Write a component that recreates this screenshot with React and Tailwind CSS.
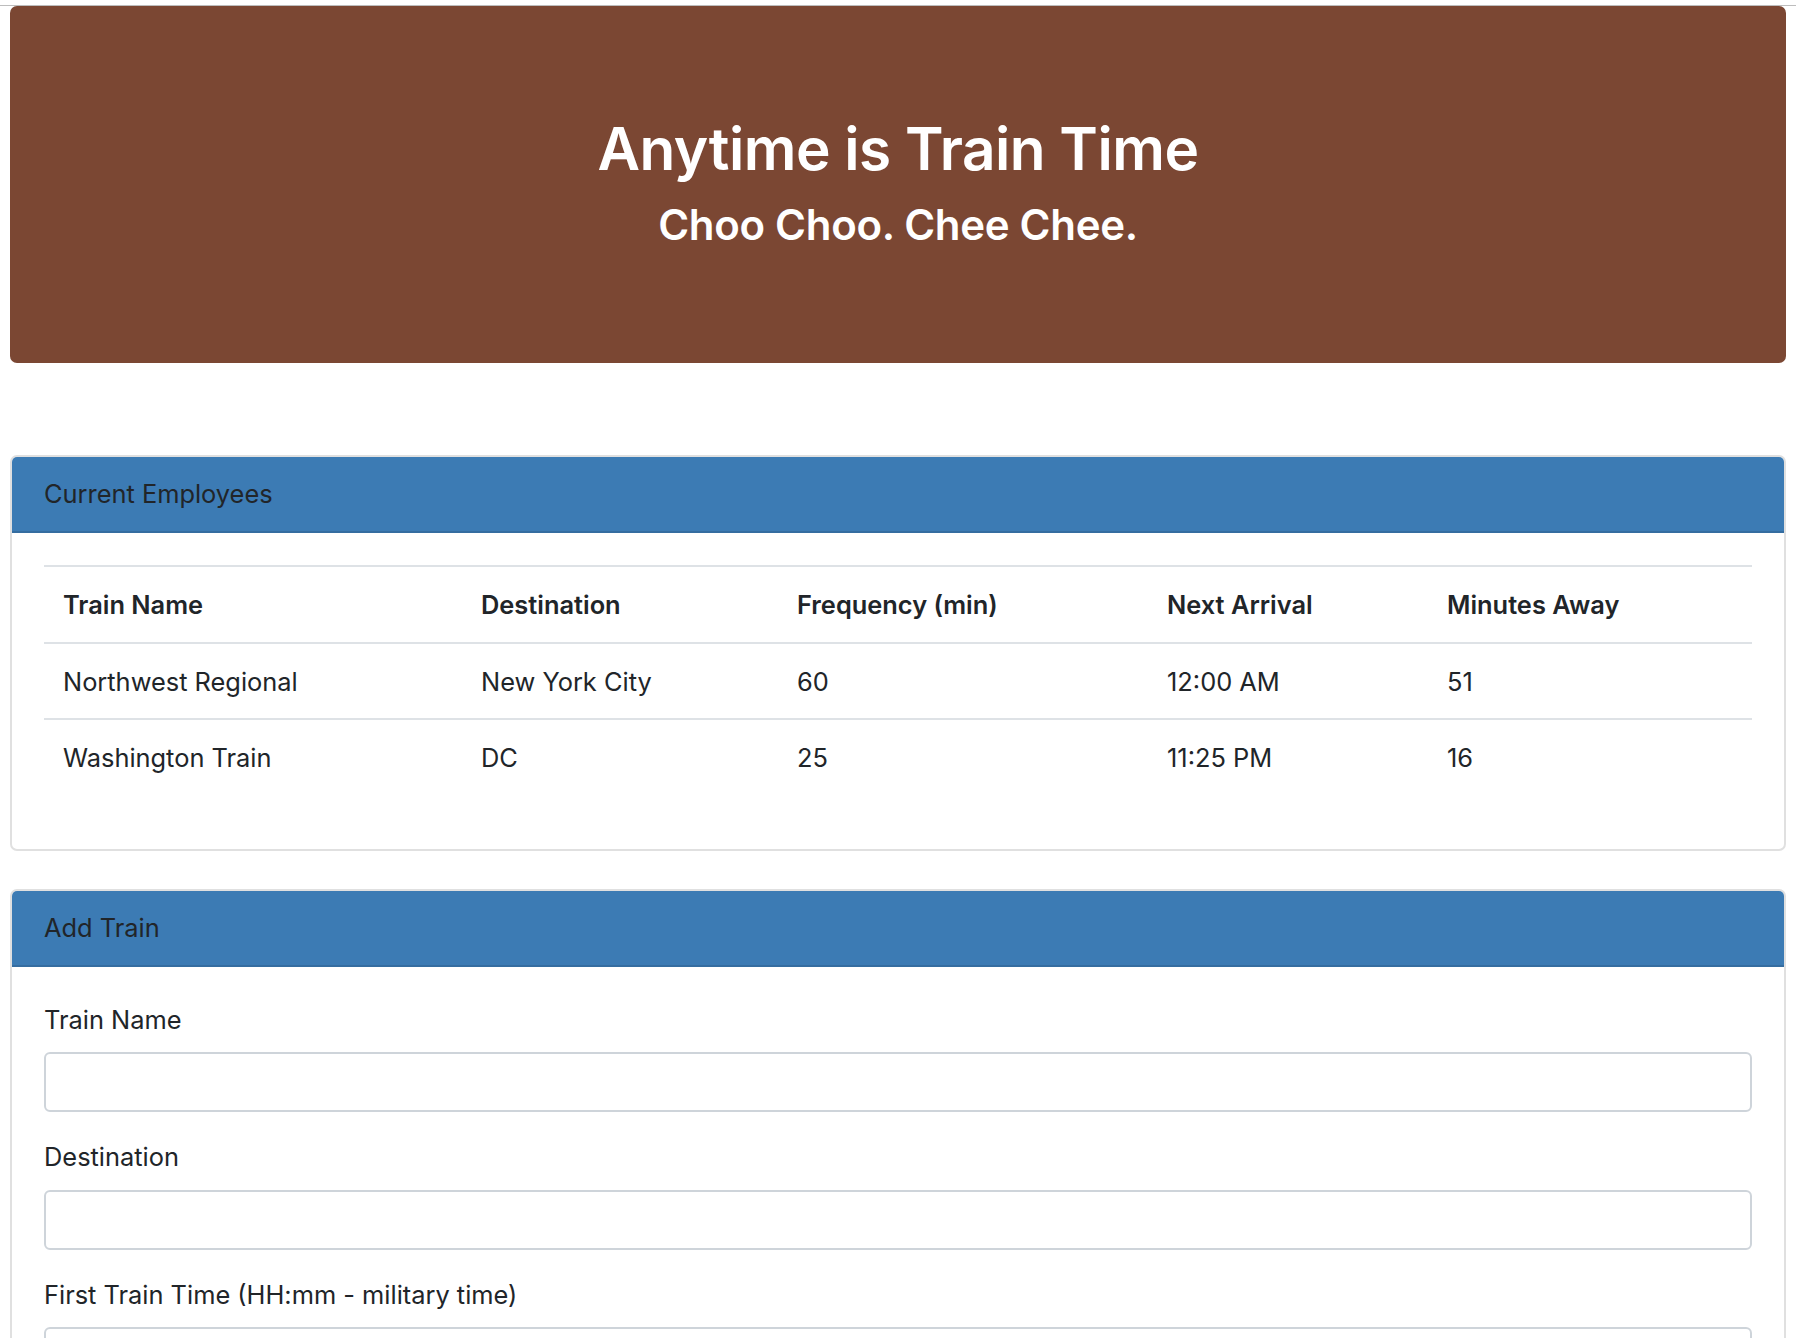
import React from "react";

const rows = [
  ["Northwest Regional", "New York City", "60", "12:00 AM", "51"],
  ["Washington Train", "DC", "25", "11:25 PM", "16"],
];

function Field({ label }) {
  return (
    <div className="mb-[26px]">
      <label className="block h-[38.4px] leading-[38.4px] mb-[13.5px]">{label}</label>
      <input
        type="text"
        className="block w-full h-[59.6px] rounded-[6px] border-2 border-[#ced4da] bg-white px-[19px] outline-none"
      />
    </div>
  );
}

export default function App() {
  return (
    <div
      className="min-h-screen bg-white text-[#212529] text-[25.4px]"
      style={{ fontFamily: 'Inter, "Noto Sans", "Liberation Sans", sans-serif' }}
    >
      <div className="h-[5px]" />
      <div className="h-px bg-[#bdbdbd]" />
      <div className="px-[10px]">
        <div className="h-[357px] rounded-[7px] bg-[#7b4733] text-white flex flex-col items-center pt-[104px]">
          <h1 className="h-[77px] leading-[77px] text-[58.5px] font-semibold tracking-[-0.5px]">
            Anytime is Train Time
          </h1>
          <h2 className="mt-[7px] h-[62px] leading-[62px] text-[42px] font-semibold tracking-[-0.3px]">
            Choo Choo. Chee Chee.
          </h2>
        </div>

        <div className="mt-[92px] rounded-[7px] border-2 border-[#e0e0e0] overflow-hidden">
          <div className="h-[76px] bg-[#3c7bb4] border-b-2 border-[#356da0] px-[32px] flex items-center">
            Current Employees
          </div>
          <div className="px-[32px] pt-[32px] pb-[28px]">
            <table className="w-full border-collapse mb-[25.6px]">
              <colgroup>
                <col className="w-[418px]" />
                <col className="w-[316px]" />
                <col className="w-[370px]" />
                <col className="w-[280px]" />
                <col />
              </colgroup>
              <thead>
                <tr className="border-t-2 border-[#dee2e6]">
                  {["Train Name", "Destination", "Frequency (min)", "Next Arrival", "Minutes Away"].map((h) => (
                    <th
                      key={h}
                      className="text-left font-semibold px-[19px] h-[77px] pt-[2px] align-middle"
                    >
                      {h}
                    </th>
                  ))}
                </tr>
              </thead>
              <tbody>
                {rows.map((r, i) => (
                  <tr key={i} className="border-t-2 border-[#dee2e6]">
                    {r.map((c, j) => (
                      <td key={j} className="px-[19px] h-[76px] pt-[2px] align-middle">
                        {c}
                      </td>
                    ))}
                  </tr>
                ))}
              </tbody>
            </table>
          </div>
        </div>

        <div className="mt-[38px] mb-[40px] rounded-[7px] border-2 border-[#e0e0e0] overflow-hidden">
          <div className="h-[76px] bg-[#3c7bb4] border-b-2 border-[#356da0] px-[32px] flex items-center">
            Add Train
          </div>
          <div className="px-[32px] pt-[34px] pb-[32px]">
            <Field label="Train Name" />
            <Field label="Destination" />
            <Field label="First Train Time (HH:mm - military time)" />
            <Field label="Frequency (min)" />
            <button className="h-[59px] px-[19px] rounded-[6px] bg-[#007bff] text-white">Submit</button>
          </div>
        </div>
      </div>
    </div>
  );
}
